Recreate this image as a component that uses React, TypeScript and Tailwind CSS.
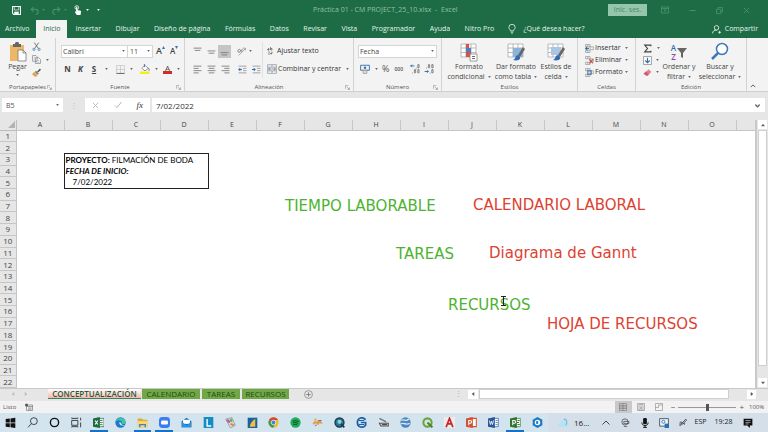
import type { ReactNode } from 'react';

const menuTabs = [
  'Insertar',
  'Dibujar',
  'Diseño de página',
  'Fórmulas',
  'Datos',
  'Revisar',
  'Vista',
  'Programador',
  'Ayuda',
  'Nitro Pro',
];

const columns = ['A', 'B', 'C', 'D', 'E', 'F', 'G', 'H', 'I', 'J', 'K', 'L', 'M', 'N', 'O'];
const rows = Array.from({ length: 22 }, (_, i) => i + 1);

function Svg({ className = 'size-3', children, box = '0 0 16 16' }: { className?: string; children: ReactNode; box?: string }) {
  return (
    <svg viewBox={box} className={`shrink-0 ${className}`} fill="none" aria-hidden="true">
      {children}
    </svg>
  );
}

function Caret({ className = 'text-[#666]' }: { className?: string }) {
  return (
    <svg viewBox="0 0 4 3" className={`h-[2px] w-[3px] shrink-0 ${className}`} aria-hidden="true">
      <path d="M0 0h4L2 3z" fill="currentColor" />
    </svg>
  );
}

function IconButton({ label, children, className = '' }: { label: string; children: ReactNode; className?: string }) {
  return (
    <button aria-label={label} className={`flex shrink-0 items-center justify-center ${className}`}>
      {children}
    </button>
  );
}

function Group({ label, width, launcher, children }: { label: string; width: string; launcher?: boolean; children: ReactNode }) {
  return (
    <section className={`flex shrink-0 flex-col border-r border-[#d2d2d2] ${width}`}>
      <div className="flex-1 pt-1">{children}</div>
      <div className="relative h-2 text-center text-[6px] leading-2 text-[#555]">
        {label}
        {launcher && (
          <Svg className="absolute right-[3px] top-[2px] size-[5px]">
            <path d="M1 12V2h9M7 7l7 7M14 8v6H8" stroke="#888" strokeWidth="2" />
          </Svg>
        )}
      </div>
    </section>
  );
}

/* ---------- Title bar and tabs ---------- */

function TitleBar() {
  return (
    <header className="relative flex h-5 shrink-0 items-center text-white">
      <div className="flex items-center pl-[12px]">
        <IconButton label="Guardar" className="mr-[9px]">
          <Svg className="size-[9px]">
            <path d="M1 1h14v14H3l-2-2z" stroke="currentColor" strokeWidth="1.8" />
            <path d="M4 1h8v6H4z" stroke="currentColor" strokeWidth="1.2" />
            <path d="M4 10h8v5H4z" fill="currentColor" />
          </Svg>
        </IconButton>
        <IconButton label="Deshacer" className="mr-[7px] gap-[3px] text-[#43916b]">
          <Svg className="size-[9px]">
            <path d="M6 2 2 6l4 4M2 6h8c6 0 6 8 0 9" stroke="currentColor" strokeWidth="2" />
          </Svg>
          <Caret className="text-[#43916b]" />
        </IconButton>
        <IconButton label="Rehacer" className="mr-[6px] gap-[3px] text-[#43916b]">
          <Svg className="size-[9px]">
            <path d="m10 2 4 4-4 4M14 6H6c-6 0-6 8 0 9" stroke="currentColor" strokeWidth="2" />
          </Svg>
          <Caret className="text-[#43916b]" />
        </IconButton>
        <IconButton label="Modo mouse o táctil" className="mr-[8px] gap-[3px]">
          <Svg className="size-[10px]">
            <circle cx="6" cy="4" r="3" stroke="currentColor" strokeWidth="1.2" />
            <path d="M5 3.500c0-1.500 2-1.500 2 0V8l5 1c1 .4 1 1 .8 2l-.8 5H6l-3-5c0-1.500 1-1.500 2 0z" fill="currentColor" />
          </Svg>
          <Caret className="text-white" />
        </IconButton>
        <IconButton label="Personalizar barra">
          <Caret className="text-white" />
        </IconButton>
      </div>
      <h1 className="absolute left-[313px] text-[7px] text-[#8fc0a5]">
        Práctica 01 - CM PROJECT_25_10.xlsx &nbsp;-&nbsp; Excel
      </h1>
      <div className="ml-auto flex items-center pr-[18px] text-[#4d9571]">
        <button className="mr-[14px] h-3 w-[39px] bg-[#93c6aa] text-[7px] leading-3 text-[#4c8a68]">Inic. ses.</button>
        <IconButton label="Opciones de cinta" className="mr-[20px]">
          <Svg className="size-[8px]">
            <path d="M1 2h14v12H1zM1 5h14M8 12V7M5.500 9.500 8 7l2.500 2.500" stroke="currentColor" strokeWidth="1.500" />
          </Svg>
        </IconButton>
        <IconButton label="Minimizar" className="mr-[20px]">
          <Svg className="size-[7px]"><path d="M1 8h14" stroke="currentColor" strokeWidth="2" /></Svg>
        </IconButton>
        <IconButton label="Restaurar" className="mr-[20px]">
          <Svg className="size-[7px]">
            <path d="M1 5h10v10H1zM5 5V1h10v10h-4" stroke="currentColor" strokeWidth="1.800" />
          </Svg>
        </IconButton>
        <IconButton label="Cerrar">
          <Svg className="size-[7px]"><path d="m2 2 12 12M14 2 2 14" stroke="currentColor" strokeWidth="1.800" /></Svg>
        </IconButton>
      </div>
    </header>
  );
}

function MenuTabs() {
  return (
    <nav className="flex h-[18px] shrink-0 items-stretch whitespace-nowrap text-[7px] text-[#e6f2eb]">
      <button className="pl-[5px] pr-[7px]">Archivo</button>
      <button className="w-[31px] bg-[#f3f3f3] text-[#1d6c45]">Inicio</button>
      <div className="flex w-[435px] justify-between px-2">
        {menuTabs.map((tab) => (
          <button key={tab}>{tab}</button>
        ))}
      </div>
      <button className="flex items-center gap-[6px] pl-[5px]">
        <Svg className="size-[10px]">
          <path d="M5.500 11C5 8.500 3 8 3 5.500a5 5 0 0 1 10 0C13 8 11 8.500 10.500 11zM6 13h4M7 15h2" stroke="currentColor" strokeWidth="1.300" />
        </Svg>
        ¿Qué desea hacer?
      </button>
      <button className="ml-auto flex items-center gap-[4px] pr-[10px]">
        <Svg className="size-[9px]">
          <circle cx="8" cy="5" r="4" stroke="currentColor" strokeWidth="1.500" />
          <path d="M1 15c0-4 3-6 7-6M11 13h5M13.500 10.500v5" stroke="currentColor" strokeWidth="1.500" />
        </Svg>
        Compartir
      </button>
    </nav>
  );
}

/* ---------- Ribbon ---------- */

function Lines({ d, className = '' }: { d: string; className?: string }) {
  return (
    <Svg className={`size-[9px] ${className}`}>
      <path d={d} stroke="#777" strokeWidth="1.500" />
    </Svg>
  );
}

function ClipboardGroup() {
  return (
    <Group label="Portapapeles" width="w-14" launcher>
      <div className="flex">
        <button className="flex w-[27px] flex-col items-center pl-[8px] text-[7px] leading-[9px] text-[#444]">
          <Svg className="h-[20px] w-[18px]" box="0 0 18 20">
            <path d="M1 3h14v16H1z" fill="#edb866" />
            <path d="M4 2h2c0-3 4-3 4 0h2v3H4z" fill="#666" />
            <path d="M9 8h5l3 3v8H9z" fill="#fff" stroke="#777" strokeWidth=".8" />
            <path d="M14 8v3h3" stroke="#777" strokeWidth=".8" />
          </Svg>
          <span className="mb-[3px]">Pegar</span>
          <Caret />
        </button>
        <div className="ml-[5px] flex flex-col items-start gap-[4px]">
          <IconButton label="Cortar">
            <Svg className="size-[9px]">
              <path d="m4 1 7 10M12 1 5 11" stroke="#666" strokeWidth="1.500" />
              <circle cx="3.500" cy="13" r="2" stroke="#3d6fa8" strokeWidth="1.300" />
              <circle cx="12.500" cy="13" r="2" stroke="#3d6fa8" strokeWidth="1.300" />
            </Svg>
          </IconButton>
          <IconButton label="Copiar" className="gap-[5px]">
            <Svg className="size-[9px]">
              <path d="M1 1h6l2 2v8H1zM6 5h6l3 3v7H6z" fill="#fff" stroke="#777" strokeWidth="1.200" />
              <path d="M3 4h3M3 7h3M8 10h5M8 13h5" stroke="#6e98c9" />
            </Svg>
            <Caret />
          </IconButton>
          <IconButton label="Copiar formato">
            <Svg className="size-[9px]">
              <path d="m9 6 5-5 2 2-5 5z" fill="#555" />
              <path d="m7 5 5 5-2 2-5-5z" fill="#777" />
              <path d="m4 7 6 6-4 3-6-5z" fill="#e0a444" />
            </Svg>
          </IconButton>
        </div>
      </div>
    </Group>
  );
}

function FontGroup() {
  return (
    <Group label="Fuente" width="w-[129px]" launcher>
      <div className="flex h-[18px] items-center pl-[5px] text-[7px] text-[#444]">
        <div className="relative flex items-center">
          <select aria-label="Fuente" className="h-[13px] w-[67px] appearance-none border border-[#d5d5d5] bg-white pl-px leading-[11px]">
            <option>Calibri</option>
          </select>
          <span className="pointer-events-none absolute right-[3px] flex"><Caret /></span>
        </div>
        <div className="relative flex items-center">
          <select aria-label="Tamaño de fuente" className="h-[13px] w-[25px] appearance-none border border-l-0 border-[#d5d5d5] bg-white pl-[2px] leading-[11px]">
            <option>11</option>
          </select>
          <span className="pointer-events-none absolute right-[3px] flex"><Caret /></span>
        </div>
        <button aria-label="Aumentar tamaño" className="ml-[3px] flex text-[9px] font-semibold leading-[10px]">
          A<Svg className="size-[3px]" box="0 0 4 4"><path d="M0 4h4L2 0z" fill="#3d6fa8" /></Svg>
        </button>
        <button aria-label="Disminuir tamaño" className="ml-[5px] flex text-[8px] font-semibold leading-[10px]">
          A<Svg className="size-[3px]" box="0 0 4 4"><path d="M0 0h4L2 4z" fill="#3d6fa8" /></Svg>
        </button>
      </div>
      <div className="flex h-[18px] items-center pl-[8px] text-[8px] leading-[10px] text-[#444]">
        <button className="w-[7px] font-bold">N</button>
        <button className="ml-[6px] w-[7px] font-bold italic">K</button>
        <button className="ml-[7px] w-[6px] font-bold underline">S</button>
        <span className="ml-[8px] flex"><Caret /></span>
        <IconButton label="Bordes" className="ml-[8px] gap-[5px]">
          <Svg className="size-[9px]">
            <path d="M1 1h14v14H1zM8 1v14M1 8h14" stroke="#b5b5b5" />
            <path d="M1 15h14" stroke="#555" strokeWidth="1.500" />
          </Svg>
          <Caret />
        </IconButton>
        <IconButton label="Color de relleno" className="ml-[7px] gap-[5px]">
          <Svg className="size-[10px]">
            <path d="m3 7 5-5 5 5-5 4z" fill="#fff" stroke="#777" strokeWidth="1.200" />
            <path d="M7 5V0M13 6c2 2 2 4 1 5" stroke="#3d6fa8" strokeWidth="1.500" />
            <path d="M0 12h15v4H0z" fill="#f4ee1d" />
          </Svg>
          <Caret />
        </IconButton>
        <button aria-label="Color de fuente" className="ml-[5px] flex items-center gap-[5px]">
          <span className="border-b-[3px] border-[#d22b26] px-[2px] text-[8px] leading-[7px]">A</span>
          <Caret />
        </button>
      </div>
    </Group>
  );
}

function AlignmentGroup() {
  return (
    <Group label="Alineación" width="w-[169px]" launcher>
      <div className="flex">
        <div className="w-[78px] border-r border-[#e0e0e0] pl-[5px]">
          <div className="flex h-[18px] items-center">
            <IconButton label="Alinear arriba" className="w-[14px]"><Lines d="M1 2h14M3 6h10" /></IconButton>
            <IconButton label="Alinear al medio" className="w-[14px]"><Lines d="M1 7h14M3 11h10" /></IconButton>
            <IconButton label="Alinear abajo" className="size-[13px] bg-[#c5c5c5]"><Lines d="M1 10h14M3 14h10" /></IconButton>
            <IconButton label="Orientación" className="ml-[6px] gap-[3px]">
              <Svg className="size-[9px]">
                <path d="M3 15 15 3M11 2h4v4" stroke="#888" strokeWidth="1.300" />
                <path d="M2 9a3 3 0 0 0 4-4C4 3 0 5 2 9M7 9l3-6" stroke="#666" strokeWidth="1.300" />
              </Svg>
              <Caret />
            </IconButton>
          </div>
          <div className="flex h-[18px] items-center">
            <IconButton label="Izquierda" className="w-[14px]"><Lines d="M1 2h14M1 6h9M1 10h14M1 14h9" /></IconButton>
            <IconButton label="Centrar" className="w-[14px]"><Lines d="M1 2h14M3 6h10M1 10h14M3 14h10" /></IconButton>
            <IconButton label="Derecha" className="w-[14px]"><Lines d="M1 2h14M6 6h9M1 10h14M6 14h9" /></IconButton>
            <IconButton label="Disminuir sangría" className="ml-[3px] w-[14px]">
              <Svg className="size-[9px]">
                <path d="M1 2h14M9 6h6M9 10h6M1 14h14" stroke="#888" strokeWidth="1.300" />
                <path d="m4 5-4 3 4 3V9h3V7H4z" fill="#2f6cb3" />
              </Svg>
            </IconButton>
            <IconButton label="Aumentar sangría" className="w-[14px]">
              <Svg className="size-[9px]">
                <path d="M1 2h14M9 6h6M9 10h6M1 14h14" stroke="#888" strokeWidth="1.300" />
                <path d="m3 5 4 3-4 3V9H0V7h3z" fill="#2f6cb3" />
              </Svg>
            </IconButton>
          </div>
        </div>
        <div className="whitespace-nowrap pl-[4px] text-[7px] text-[#333]">
          <button className="flex h-[18px] items-center gap-[2px]">
            <Svg className="size-[8px]">
              <path d="M1 6h3V3H2M1 6V5h3M7 0v6h3V3H7M2 10h4M2 14h4M10 9v4H7l2-2M7 13l2 2" stroke="#555" strokeWidth="1.300" />
            </Svg>
            Ajustar texto
          </button>
          <button className="flex h-[18px] items-center gap-px">
            <Svg className="size-[10px]">
              <path d="M1 1h14v14H1zM1 5h14M1 11h14M8 1v4M8 11v4" stroke="#888" />
              <path d="m5 6-3 2 3 2M11 6l3 2-3 2M3 8h10" stroke="#3d6fa8" />
            </Svg>
            Combinar y centrar
            <span className="ml-[4px] flex"><Caret /></span>
          </button>
        </div>
      </div>
    </Group>
  );
}

function NumberGroup() {
  return (
    <Group label="Número" width="w-[88px]" launcher>
      <div className="flex h-[18px] items-center pl-[4px]">
        <div className="relative flex items-center text-[7px] text-[#444]">
          <select aria-label="Formato de número" className="h-[13px] w-[79px] appearance-none border border-[#d5d5d5] bg-white pl-px leading-[11px]">
            <option>Fecha</option>
          </select>
          <span className="pointer-events-none absolute right-[3px] flex"><Caret /></span>
        </div>
      </div>
      <div className="flex h-[18px] items-center pl-[6px] text-[#555]">
        <IconButton label="Formato de moneda" className="gap-[5px]">
          <Svg className="size-[10px]">
            <path d="M1 2h14v8H1z" stroke="#3d6fa8" strokeWidth="1.500" />
            <circle cx="8" cy="6" r="2" fill="#3d6fa8" />
            <path d="M5 10h6v5H5z" fill="#ddd" stroke="#888" />
          </Svg>
          <Caret />
        </IconButton>
        <button className="ml-[4px] text-[9px] leading-[10px]">%</button>
        <button className="ml-[5px] text-[5px] font-semibold leading-[10px]">000</button>
        <IconButton label="Aumentar decimales" className="ml-[7px]">
          <Svg className="size-[10px]">
            <path d="M7 3H1M3 1 1 3l2 2" stroke="#2f6cb3" strokeWidth="1.500" />
            <path d="M10 6v1M4 14v1" stroke="#555" strokeWidth="1.500" />
            <path d="M12.500 1h2v5h-2zM7 9h2v5H7zM12.500 9h2v5h-2z" stroke="#666" strokeWidth="1.200" />
          </Svg>
        </IconButton>
        <IconButton label="Disminuir decimales" className="ml-[4px]">
          <Svg className="size-[10px]">
            <path d="M1 12h6M5 10l2 2-2 2" stroke="#2f6cb3" strokeWidth="1.500" />
            <path d="M4 6v1M10 14v1" stroke="#555" strokeWidth="1.500" />
            <path d="M7 1h2v5H7zM12.500 1h2v5h-2zM12.500 9h2v5h-2z" stroke="#666" strokeWidth="1.200" />
          </Svg>
        </IconButton>
      </div>
    </Group>
  );
}

function TableIcon({ children }: { children: ReactNode }) {
  return (
    <Svg className="h-[20px] w-[18px]" box="0 0 18 20">
      <path d="M1 2h15v13H1z" fill="#fff" />
      <path d="M1 2h15v13H1zM1 6h15M1 10.500h15M6 2v13M11 2v13" stroke="#aaa" strokeWidth=".8" />
      {children}
    </Svg>
  );
}

function Brush() {
  return (
    <>
      <path d="m16 5 2 2-5 8-2-2z" fill="#666" />
      <path d="M11 13c-3 0-2 4-5 5 4 1 8 0 7-3z" fill="#2f6cb3" />
    </>
  );
}

function BigButton({ icon, lines, className = '' }: { icon: ReactNode; lines: [string, string]; className?: string }) {
  return (
    <button className={`flex shrink-0 flex-col items-center whitespace-nowrap text-[7px] leading-[10px] text-[#444] ${className}`}>
      {icon}
      <span>{lines[0]}</span>
      <span className="flex items-center gap-[3px]">
        {lines[1]}
        <Caret />
      </span>
    </button>
  );
}

function StylesGroup() {
  return (
    <Group label="Estilos" width="w-[136px]">
      <div className="flex">
        <BigButton
          className="w-[54px]"
          lines={['Formato', 'condicional']}
          icon={
            <TableIcon>
              <path d="M6 2h3v4H6zM6 10h5v5H6z" fill="#d0534e" />
              <path d="M6 6h5v4H6z" fill="#4d7fbd" />
              <path d="M10 12h7v7h-7z" fill="#fff" stroke="#888" strokeWidth=".8" />
              <path d="M12 14.500h3M12 16.500h3" stroke="#444" strokeWidth=".8" />
            </TableIcon>
          }
        />
        <BigButton
          className="w-[40px]"
          lines={['Dar formato', 'como tabla']}
          icon={
            <TableIcon>
              <path d="M6 6h10v9H6z" fill="#8db3dc" />
              <Brush />
            </TableIcon>
          }
        />
        <BigButton
          className="w-[40px]"
          lines={['Estilos de', 'celda']}
          icon={
            <TableIcon>
              <path d="M4 5h10v8H4z" fill="#a9c6e6" />
              <Brush />
            </TableIcon>
          }
        />
      </div>
    </Group>
  );
}

function CellsGroup() {
  const items = [
    { label: 'Insertar', color: '#3d6fa8', d: 'M1 8h6M4 5 1 8l3 3' },
    { label: 'Eliminar', color: '#cc4a3f', d: 'm8 6 6 7M14 6l-6 7' },
    { label: 'Formato', color: '#3d6fa8', d: 'M5 5h6v6H5z' },
  ];
  return (
    <Group label="Celdas" width="w-[58px]">
      <div className="pl-[7px] text-[7px] text-[#333]">
        {items.map((item) => (
          <button key={item.label} className="flex h-3 w-[43px] items-center">
            <Svg className="mr-px size-[9px]">
              <path d="M1 1h8v4H1zM1 11h8v4H1zM9 5h6v5H9zM5 1v4M5 11v4" stroke="#888" strokeWidth="1.100" />
              <path d={item.d} stroke={item.color} strokeWidth="1.800" />
            </Svg>
            {item.label}
            <span className="ml-auto flex"><Caret /></span>
          </button>
        ))}
      </div>
    </Group>
  );
}

function EditGroup() {
  return (
    <Group label="Edición" width="w-[111px]">
      <div className="flex">
        <div className="w-[21px] pl-[7px]">
          <IconButton label="Autosuma" className="h-3 gap-[5px]">
            <Svg className="size-[9px]"><path d="M14 4V2H3l5 6-5 6h11v-2" stroke="#444" strokeWidth="2" /></Svg>
            <Caret />
          </IconButton>
          <IconButton label="Rellenar" className="h-3 gap-[4px]">
            <Svg className="size-[9px]">
              <path d="M1 1h14v14H1z" fill="#fff" stroke="#777" strokeWidth="1.200" />
              <path d="M8 3v9M4 8l4 4 4-4" stroke="#2f6cb3" strokeWidth="2" />
            </Svg>
            <Caret />
          </IconButton>
          <IconButton label="Borrar" className="h-3 gap-[4px]">
            <Svg className="size-[9px]">
              <path d="m10 2 5 5-8 7-6-4z" fill="#e57f8f" />
              <path d="m5 6 6 5-4 3-6-4z" fill="#d35b6e" />
            </Svg>
            <Caret />
          </IconButton>
        </div>
        <BigButton
          className="w-[44px]"
          lines={['Ordenar y', 'filtrar']}
          icon={
            <span className="flex h-5 items-center">
              <span className="flex flex-col text-[8px] font-semibold leading-[9px]">
                <span className="text-[#2f6cb3]">A</span>
                <span className="text-[#8c4aa8]">Z</span>
              </span>
              <Svg className="size-[11px]" box="0 0 11 11">
                <path d="M1 1h10L7 6v5l-2-1V6z" fill="#666" />
              </Svg>
            </span>
          }
        />
        <BigButton
          className="w-[38px]"
          lines={['Buscar y', 'seleccionar']}
          icon={
            <Svg className="h-[20px] w-[18px]" box="0 0 18 20">
              <circle cx="11" cy="7" r="5.500" fill="#fff" stroke="#3d78b8" strokeWidth="1.500" />
              <path d="m7 11-6 6" stroke="#3d78b8" strokeWidth="2.500" />
            </Svg>
          }
        />
      </div>
    </Group>
  );
}

function Ribbon() {
  return (
    <div className="flex h-[54px] shrink-0 border-b border-[#cfcfcf] bg-[#f3f3f3]">
      <ClipboardGroup />
      <FontGroup />
      <AlignmentGroup />
      <NumberGroup />
      <StylesGroup />
      <CellsGroup />
      <EditGroup />
      <button aria-label="Contraer la cinta" className="ml-auto self-end pb-[2px] pr-[12px]">
        <Svg className="size-[6px]"><path d="m2 11 6-6 6 6" stroke="#555" strokeWidth="2.500" /></Svg>
      </button>
    </div>
  );
}

/* ---------- Formula bar ---------- */

function FormulaBar() {
  return (
    <div className="flex h-7 shrink-0 items-center pb-[2px] pr-[3px]">
      <div className="relative ml-[2px] flex items-center">
        <input aria-label="Cuadro de nombres" defaultValue="B5" className="h-[14px] w-[61px] bg-white pl-[4px] text-[7px] text-[#555]" />
        <span className="pointer-events-none absolute right-[4px] flex"><Caret /></span>
      </div>
      <span className="mx-[7px] text-[8px] leading-3 text-[#bbb]">⋮</span>
      <div className="flex h-[14px] w-[65px] items-center justify-between bg-white px-[7px]">
        <IconButton label="Cancelar">
          <Svg className="size-[7px]"><path d="m2 2 12 12M14 2 2 14" stroke="#b5b5b5" strokeWidth="2" /></Svg>
        </IconButton>
        <IconButton label="Introducir">
          <Svg className="size-[8px]"><path d="m2 9 4 4 9-11" stroke="#b5b5b5" strokeWidth="2" /></Svg>
        </IconButton>
        <button className="font-['Liberation_Serif',serif] text-[9px] italic leading-3 text-[#333]">fx</button>
      </div>
      <div className="relative ml-[2px] flex flex-1 items-center">
        <input aria-label="Barra de fórmulas" defaultValue="7/02/2022" className="h-[14px] w-full bg-white pl-[4px] text-[8px] text-[#333]" />
        <span className="pointer-events-none absolute right-[5px] flex">
          <Svg className="size-[5px]"><path d="m1 5 7 7 7-7" stroke="#666" strokeWidth="4" /></Svg>
        </span>
      </div>
    </div>
  );
}

/* ---------- Sheet ---------- */

function ProjectCell({ row }: { row: number }) {
  if (row === 3) {
    return (
      <td colSpan={3} className="whitespace-nowrap border-x border-t border-[#222] pl-px">
        <b>PROYECTO:</b> FILMACIÓN DE BODA
      </td>
    );
  }
  if (row === 4) {
    return (
      <td colSpan={3} className="border-x border-[#222] pl-px font-bold italic">
        FECHA DE INICIO:
      </td>
    );
  }
  return (
    <td colSpan={3} className="border-x border-b border-[#222] pl-2">
      7/02/2022
    </td>
  );
}

function WordArt({ className, children }: { className: string; children: ReactNode }) {
  return (
    <p className={`absolute whitespace-nowrap font-['DejaVu_Sans',sans-serif] text-[15px] leading-5 ${className}`}>
      {children}
    </p>
  );
}

function Sheet() {
  return (
    <main className="flex min-h-0 flex-1">
      <div className="relative flex-1 overflow-hidden border-r-2 border-[#c9c9c9] bg-white">
        <table className="h-full w-full table-fixed border-collapse font-['Lato',sans-serif] text-[8px] leading-[10px] text-black">
          <thead>
            <tr className="h-[10px] bg-[#e6e6e6] font-['Open_Sans',sans-serif] text-[7px] leading-[9px] text-[#444]">
              <th className="w-4 border-b border-r border-[#bdbdbd]">
                <svg viewBox="0 0 8 8" className="ml-auto mr-px size-[7px]" aria-hidden="true">
                  <path d="M8 0v8H0z" fill="#b3b3b3" />
                </svg>
              </th>
              {columns.map((column) => (
                <th key={column} className="w-12 border-b border-r border-[#c6c6c6] font-normal">{column}</th>
              ))}
              <th className="border-b border-[#c6c6c6]" />
            </tr>
          </thead>
          <tbody>
            {rows.map((row) => (
              <tr key={row}>
                <th className="border-b border-r border-[#c6c6c6] bg-[#e6e6e6] font-['Open_Sans',sans-serif] font-normal text-[#444]">{row}</th>
                <td />
                {row >= 3 && row <= 5 ? <ProjectCell row={row} /> : <td colSpan={3} />}
                <td colSpan={12} />
              </tr>
            ))}
          </tbody>
        </table>
        {/* Text boxes floating over the cells */}
        <WordArt className="left-[285px] top-[76px] text-[#4db32f]">TIEMPO LABORABLE</WordArt>
        <WordArt className="left-[473px] top-[75px] text-[#dd4232]">CALENDARIO LABORAL</WordArt>
        <WordArt className="left-[396px] top-[124px] text-[#4db32f]">TAREAS</WordArt>
        <WordArt className="left-[489px] top-[123px] text-[#dd4232]">Diagrama de Gannt</WordArt>
        <WordArt className="left-[448px] top-[175px] text-[#4db32f]">RECURSOS</WordArt>
        <WordArt className="left-[547px] top-[194px] text-[#dd4232]">HOJA DE RECURSOS</WordArt>
        <svg viewBox="0 0 5 10" className="absolute left-[501px] top-[176px] h-[10px] w-[5px]" fill="none" aria-hidden="true">
          <path d="M0 .5h5M2.500 0v10M0 9.500h5" stroke="#222" />
        </svg>
      </div>
      <div className="flex w-[11px] shrink-0 flex-col px-px">
        <IconButton label="Subir" className="mb-px h-[9px] bg-white">
          <Svg className="size-[4px]"><path d="M0 13h16L8 3z" fill="#666" /></Svg>
        </IconButton>
        <div className="flex-1 border border-[#cfcfcf] bg-white" />
        <div className="h-3" />
        <IconButton label="Bajar" className="mb-px h-[9px] bg-white">
          <Svg className="size-[4px]"><path d="M0 3h16L8 13z" fill="#666" /></Svg>
        </IconButton>
      </div>
    </main>
  );
}

function SheetTabs() {
  return (
    <div className="flex h-[13px] shrink-0 items-center border-t border-[#c9c9c9] pb-[2px] text-[8px] text-[#24491a]">
      <div className="flex w-12 items-center gap-[9px] pl-[11px]">
        <IconButton label="Hoja anterior"><Svg className="size-[4px]"><path d="M13 0v16L3 8z" fill="#bbb" /></Svg></IconButton>
        <IconButton label="Hoja siguiente"><Svg className="size-[4px]"><path d="M3 0v16l10-8z" fill="#bbb" /></Svg></IconButton>
      </div>
      <button className="h-[10px] w-[93px] border-b border-[#3f7f5c] bg-linear-to-b from-white to-[#f3b5ae] font-semibold leading-[9px] text-[#1d5c3d]">
        CONCEPTUALIZACIÓN
      </button>
      <button className="ml-px h-[10px] w-[58px] bg-[#70a845] leading-[10px]">CALENDARIO</button>
      <button className="ml-[2px] h-[10px] w-[38px] bg-[#70a845] leading-[10px]">TAREAS</button>
      <button className="ml-[2px] h-[10px] w-[47px] bg-[#70a845] leading-[10px]">RECURSOS</button>
      <IconButton label="Hoja nueva" className="ml-[15px]">
        <Svg className="size-[9px]">
          <circle cx="8" cy="8" r="7" stroke="#777" strokeWidth="1.200" />
          <path d="M8 4v8M4 8h8" stroke="#777" strokeWidth="1.500" />
        </Svg>
      </IconButton>
      <span className="ml-auto text-[7px] leading-[10px] text-[#aaa]">⋮</span>
      <IconButton label="Desplazar a la izquierda" className="ml-[6px] h-[9px] w-[10px] bg-white">
        <Svg className="size-[4px]"><path d="M13 0v16L3 8z" fill="#555" /></Svg>
      </IconButton>
      <div className="ml-px h-[10px] w-[250px] border border-[#cfcfcf] bg-white" />
      <IconButton label="Desplazar a la derecha" className="ml-[18px] mr-[12px] h-[9px] w-[9px] bg-white">
        <Svg className="size-[4px]"><path d="M3 0v16l10-8z" fill="#555" /></Svg>
      </IconButton>
    </div>
  );
}

function StatusBar() {
  return (
    <div className="flex h-3 shrink-0 items-center bg-[#f2f2f2] text-[6px] text-[#555]">
      <span className="ml-[3px] w-[22px]">Listo</span>
      <Svg className="size-[8px]">
        <path d="M3 4h12v11H3zM3 7h12M6 10h7M6 12.500h7" stroke="#666" strokeWidth="1.200" />
        <circle cx="3" cy="4" r="3" fill="#555" />
      </Svg>
      <IconButton label="Normal" className="ml-auto h-3 w-[17px] bg-[#c9c9c9]">
        <Svg className="size-[8px]"><path d="M1 1h14v14H1zM1 5h14M1 8h14M1 11h14M8 1v14" stroke="#777" strokeWidth="1.200" /></Svg>
      </IconButton>
      <IconButton label="Diseño de página" className="w-[18px]">
        <Svg className="size-[8px]"><path d="M1 1h14v14H1zM4 3h8v11H4zM6 6h4M6 9h4M6 11h4" stroke="#888" strokeWidth="1.200" /></Svg>
      </IconButton>
      <IconButton label="Saltos de página" className="w-[18px]">
        <Svg className="size-[8px]"><path d="M1 1h14v14H1zM1 9h6V4h8" stroke="#888" strokeWidth="1.200" /></Svg>
      </IconButton>
      <button aria-label="Alejar" className="ml-[3px] text-[8px] leading-3">−</button>
      <input
        type="range"
        aria-label="Zoom"
        defaultValue={50}
        className="mx-[3px] h-px w-[58px] appearance-none bg-[#999] [&::-webkit-slider-thumb]:h-[7px] [&::-webkit-slider-thumb]:w-[3px] [&::-webkit-slider-thumb]:appearance-none [&::-webkit-slider-thumb]:bg-[#555]"
      />
      <button aria-label="Acercar" className="text-[8px] leading-3">+</button>
      <span className="ml-[5px] w-[19px]">100%</span>
    </div>
  );
}

/* ---------- Taskbar ---------- */

const apps: { name: string; open?: boolean; icon: ReactNode }[] = [
  { name: 'Inicio', icon: <path d="M1 3l6-1v6H1zM8 2l7-1v7H8zM1 9h6v6l-6-1zM8 9h7v7l-7-1z" fill="#111" /> },
  {
    name: 'Buscar',
    icon: <><circle cx="10" cy="6" r="5" stroke="#333" strokeWidth="1.300" /><path d="m6.500 9.500-5 5.500" stroke="#333" strokeWidth="1.300" /></>,
  },
  { name: 'Cortana', icon: <circle cx="8" cy="8" r="6" stroke="#111" strokeWidth="2" /> },
  { name: 'Vista de tareas', icon: <path d="M1 5h9v7H1zM1 1v1h9V1M1 15v-1h9v1M14 1v4M14 8v7" stroke="#333" strokeWidth="1.300" /> },
  {
    name: 'Excel',
    open: true,
    icon: <><path d="M8 2h8v12H8z" fill="#e8f2ea" stroke="#1e6b40" /><path d="M10 5h4M10 8h4M10 11h4" stroke="#1e6b40" /><path d="M0 2l10-2v16L0 14z" fill="#1e6b40" /><path d="m3 5 4 6M7 5l-4 6" stroke="#fff" strokeWidth="1.500" /></>,
  },
  {
    name: 'Edge',
    icon: <><circle cx="8" cy="8" r="7.500" fill="#1b77c9" /><path d="M1 7C2 0 14-1 15.500 7c0 4-5 4-6 2 2-2-2-5-5-4C2 5 1 7 1 7" fill="#3fc6a2" /><path d="M7 7c-2 3 1 7 7 5-1-1-5 0-5-3z" fill="#d7edf5" /></>,
  },
  {
    name: 'Explorador',
    open: true,
    icon: <><path d="M1 2h6l2 2h6v11H1z" fill="#e2ab36" /><path d="M1 6h14v9H1z" fill="#f8d775" /><path d="M4 15v-4h8v4" stroke="#3e83c4" strokeWidth="2" /></>,
  },
  {
    name: 'Zoom',
    open: true,
    icon: <><rect width="16" height="16" rx="5" fill="#3b7df0" /><rect x="3" y="5" width="10" height="6" rx="2" fill="#fff" /></>,
  },
  { name: 'Correo', icon: <><path d="m1 6 7-5 7 5v9H1z" fill="#1769aa" /><path d="M3 4h10v6H3z" fill="#fff" /><path d="m1 7 7 5 7-5v8H1z" fill="#2794dd" /></> },
  { name: 'Lector', icon: <><path d="M1 0h14v16H1z" fill="#168cc4" /><path d="M6 3v10h6" stroke="#fff" strokeWidth="2" /></> },
  {
    name: 'Paint',
    icon: <><path d="m1 3 9-2 5 11-7 4z" fill="#ddd" stroke="#888" /><path d="m3 4 4 4" stroke="#c648a9" strokeWidth="3" /><path d="m8 3 2 4" stroke="#58b05b" strokeWidth="3" /><path d="m8 10 5 2" stroke="#c8913d" strokeWidth="3" /></>,
  },
  { name: 'Presentador', icon: <><path d="M1 1h14v15H1z" fill="#1c6298" /><path d="M4 14c1-5 4-9 8-11v11z" fill="#f0bd45" /></> },
  {
    name: 'Chrome',
    icon: <><circle cx="8" cy="8" r="7.500" fill="#e9bd35" /><path d="M8 8 1.500 4.500C4-1 12-1 14.500 4.500H8z" fill="#d94435" /><path d="M8 8 1.500 4.500C-1 10 3 15 7.500 15.500L10 10z" fill="#3c9c52" /><circle cx="8" cy="8" r="3.300" fill="#3f7fe0" stroke="#fff" /></>,
  },
  { name: 'Spotify', icon: <><circle cx="8" cy="8" r="7.500" fill="#1eaf58" /><path d="M4 6c3-1 6-.6 8.500.7M4.500 8.500c3-.7 5-.3 7 .8M5 11c2-.5 4-.3 5.500.6" stroke="#123d22" strokeWidth="1.300" /></> },
  { name: 'Mapas', icon: <><path d="M1 11c0-4 3-6 6-4 1-4 7-3 8 3l-4-1-2 3-3-3z" fill="#e29a3c" /><circle cx="5" cy="4" r="2" fill="#e5b35d" /><path d="M9 5h5M4 12h3" stroke="#8b6bb0" strokeWidth="1.500" /></> },
  { name: 'QuickTime', icon: <><circle cx="8" cy="8" r="6.500" fill="#2d7694" stroke="#173b4e" strokeWidth="2" /><circle cx="8" cy="7" r="3" fill="#8fd0d7" /><path d="m10 10 5 5" stroke="#173b4e" strokeWidth="2.500" /></> },
  { name: 'Global Mapper', icon: <><path d="M14 4C10-1 2 1 2 8s8 9 12 4V8H7" stroke="#1c62a5" strokeWidth="2.500" /><path d="M4 5h8M4 11h8" stroke="#1c62a5" strokeWidth="1.500" /></> },
  { name: 'Escáner', icon: <><path d="m2 2 10 5" stroke="#777" strokeWidth="2" /><path d="M2 9h13v4H4z" fill="#ccc" stroke="#555" strokeWidth="1.500" /><path d="M6 11h7" stroke="#444" strokeWidth="1.500" /></> },
  { name: 'Google Earth', icon: <><circle cx="8" cy="8" r="7.500" fill="#4f86c0" /><path d="M2 5c4-3 6 3 11-2M1 10c5-3 8 3 13-1" stroke="#d5e5f1" strokeWidth="2" /></> },
  { name: 'QGIS', icon: <><circle cx="8" cy="8" r="6" stroke="#6fa33a" strokeWidth="3" /><path d="m8 8 7 7" stroke="#4f842b" strokeWidth="3" /></> },
  { name: 'AutoCAD', icon: <><path d="M0 0h16v16H0z" fill="#f5e9e9" /><path d="M3 15 8 2l5 13M5 10h6" stroke="#c02a2d" strokeWidth="2.500" /></> },
  { name: 'PowerPoint', icon: <><path d="M6 2h9v12H6z" fill="#fff" stroke="#d35230" strokeWidth="1.500" /><path d="m0 2 10-2v16L0 14z" fill="#d35230" /><path d="M4 12V5h2c3 0 3 4 0 4H4" stroke="#fff" strokeWidth="1.500" /></> },
  { name: 'Word', icon: <><path d="M6 2h9v12H6z" fill="#fff" stroke="#2b579a" /><path d="M11 5h3M11 8h3M11 11h3" stroke="#2b579a" /><path d="m0 2 10-2v16L0 14z" fill="#2b579a" /><path d="m2 5 1.500 6L5 6l1.500 5L8 5" stroke="#fff" strokeWidth="1.200" /></> },
  { name: 'Project', open: true, icon: <><path d="M6 2h9v12H6z" fill="#fff" stroke="#31752f" /><path d="M11 5h3M10 8h3M11 11h3" stroke="#31752f" strokeWidth="1.500" /><path d="m0 2 10-2v16L0 14z" fill="#31752f" /><path d="M4 12V5h2c3 0 3 4 0 4H4" stroke="#fff" strokeWidth="1.500" /></> },
  { name: 'Cámara', icon: <><path d="m8 0 7 4v8l-7 4-7-4V4z" fill="#1b79c8" /><circle cx="8" cy="8" r="4" fill="#fff" /><path d="M6 6h3v4H6z" fill="#1b79c8" /></> },
];

function Taskbar() {
  return (
    <footer className="flex h-[19px] shrink-0 items-stretch bg-[#d3e4ef] text-[#222]">
      <div className="grid flex-1 grid-cols-[repeat(25,minmax(0,1fr))]">
        {apps.map((app) => (
          <button
            key={app.name}
            aria-label={app.name}
            className={`mx-[2px] flex items-center justify-center border-y-2 border-t-transparent ${app.open ? 'border-b-[#1573c6]' : 'border-b-transparent'}`}
          >
            <Svg className="size-[11px]">{app.icon}</Svg>
          </button>
        ))}
      </div>
      <div className="flex w-[220px] shrink-0 items-center bg-[#d5dfea]">
        <button className="ml-[9px] flex items-center gap-[5px] text-[8px]">
          <Svg className="size-[12px]">
            <path d="M2 13c-3-4 2-6 3-6 1-5 8-5 8 0 4 1 3 6 0 6z" fill="#b9e1f5" />
            <path d="M9 3c4-1 5 4 3 8" stroke="#6fb9de" strokeWidth="1.500" />
          </Svg>
          16...
        </button>
        <IconButton label="Iconos ocultos" className="ml-auto w-5">
          <Svg className="size-[8px]"><path d="m1 11 7-7 7 7" stroke="#333" strokeWidth="1.800" /></Svg>
        </IconButton>
        <IconButton label="Reunión" className="w-[19px]">
          <Svg className="size-[9px]">
            <circle cx="7" cy="7" r="5.500" stroke="#444" strokeWidth="1.300" />
            <path d="M5 6h9v4H5zM5 15h6" stroke="#444" strokeWidth="1.300" />
          </Svg>
        </IconButton>
        <IconButton label="Micrófono" className="w-[19px]">
          <Svg className="size-[10px]">
            <rect x="5" y="0" width="6" height="10" rx="2" fill="#111" />
            <path d="M3 7c0 7 10 7 10 0M8 12v4M5 15h6" stroke="#111" strokeWidth="1.500" />
          </Svg>
        </IconButton>
        <IconButton label="Red" className="w-[19px]">
          <Svg className="size-[10px]">
            <path d="M1 1h14v12H1z" fill="#eef5fa" stroke="#345" strokeWidth="1.300" />
            <circle cx="7" cy="6" r="2.500" stroke="#2a70ad" strokeWidth="1.300" />
            <path d="M9 9h7v7H9z" fill="#2a70ad" />
          </Svg>
        </IconButton>
        <IconButton label="Lápiz" className="w-[19px]">
          <Svg className="size-[9px]">
            <path d="M2 13c5-1-1-5 3-6 4 0 1 6-1 7M6 10l8-8 1 2-7 7c4-3 5-1 3 1" stroke="#333" strokeWidth="1.400" />
          </Svg>
        </IconButton>
        <span className="w-[17px] text-center text-[7px]">ESP</span>
        <time className="w-[29px] text-center text-[7px]">19:28</time>
        <IconButton label="Notificaciones" className="ml-[5px] mr-[15px]">
          <Svg className="size-[10px]">
            <path d="M1 1h14v11h-4v4l-4-4H1z" fill="#111" />
            <path d="M4 4h8M4 7h8M4 9.500h5" stroke="#d5dfea" />
          </Svg>
        </IconButton>
      </div>
    </footer>
  );
}

export default function App() {
  return (
    <div className="flex h-screen flex-col overflow-hidden bg-[#e6e6e6] font-['Open_Sans','Noto_Sans',sans-serif]">
      <div className="shrink-0 bg-[#1d6c45]">
        <TitleBar />
        <MenuTabs />
      </div>
      <Ribbon />
      <FormulaBar />
      <Sheet />
      <SheetTabs />
      <StatusBar />
      <Taskbar />
    </div>
  );
}
